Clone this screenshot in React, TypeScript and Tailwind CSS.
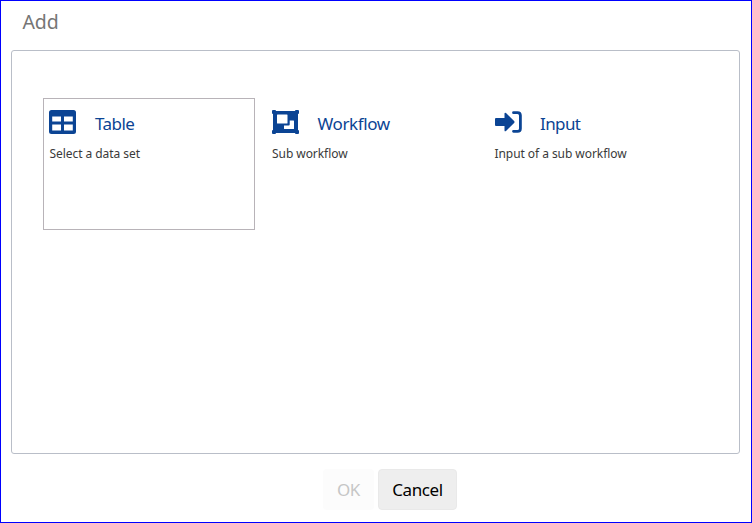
import type { ReactNode } from 'react';

function TableIcon() {
  return (
    <svg width="27" height="24" viewBox="0 0 27 24" className="-ml-[0.5px] block">
      <path
        fill="#0b4494"
        fillRule="evenodd"
        d="M2.5 0H24.5A2.5 2.5 0 0 1 27 2.5V21.5A2.5 2.5 0 0 1 24.5 24H2.5A2.5 2.5 0 0 1 0 21.5V2.5A2.5 2.5 0 0 1 2.5 0ZM3.2 6.5V11.5H12V6.5ZM15 6.5V11.5H23.8V6.5ZM3.2 14.5V20.5H12V14.5ZM15 14.5V20.5H23.8V14.5Z"
      />
    </svg>
  );
}

function WorkflowIcon() {
  return (
    <svg width="27" height="24" viewBox="0 0 27 24" className="block">
      <path
        fill="#0b4494"
        fillRule="evenodd"
        d="M0 1Q0 0 1 0H3Q4 0 4 1H23Q23 0 24 0H26Q27 0 27 1V3Q27 4 26 4V20Q27 20 27 21V23Q27 24 26 24H24Q23 24 23 23H4Q4 24 3 24H1Q0 24 0 23V21Q0 20 1 20V4Q0 4 0 3ZM5.5 4.5Q5 4.5 5 5V13Q5 13.5 5.5 13.5H15Q15.5 13.5 15.5 13V5Q15.5 4.5 15 4.5ZM17.7 10.5V14.5Q17.7 15.5 16.7 15.5H12V18.5Q12 19 12.5 19H21.5Q22 19 22 18.5V11Q22 10.5 21.5 10.5Z"
      />
    </svg>
  );
}

function InputIcon() {
  return (
    <svg width="27" height="22" viewBox="0 0 27 22" className="block">
      <path
        fill="#0b4494"
        d="M1 7H9.5V2.5Q9.7 1.1 11 2L19.1 10Q20 11 19.1 12L11 20Q9.7 20.9 9.5 19.5V15H1Q0 15 0 14V8Q0 7 1 7Z"
      />
      <path
        fill="none"
        stroke="#0b4494"
        strokeWidth="2.8"
        strokeLinecap="round"
        d="M18.5 1.7H22.5Q25.4 1.7 25.4 4.6V17.4Q25.4 20.3 22.5 20.3H18.5"
      />
    </svg>
  );
}

type ItemProps = {
  icon: ReactNode;
  title: string;
  titleClass: string;
  description: string;
  selected?: boolean;
};

function Item({ icon, title, titleClass, description, selected }: ItemProps) {
  return (
    <button
      className={`flex h-[132px] w-[212px] flex-col items-start border pl-[5.5px] pt-[11px] text-left ${
        selected ? 'border-[#b8b3b8]' : 'border-transparent'
      }`}
    >
      <span className="flex h-6 items-center">
        <span className="w-[45.5px]">{icon}</span>
        <span className={`whitespace-nowrap pt-[3px] text-[17px] leading-6 text-[#0b4494] ${titleClass}`}>{title}</span>
      </span>
      <span className="mt-3 whitespace-nowrap text-[12px] leading-4 tracking-[-0.06px] text-[#3a3a3a]">
        {description}
      </span>
    </button>
  );
}

export default function App() {
  return (
    <main className="flex h-[523px] w-[752px] flex-col border border-[#0000ff] bg-white px-2.5 font-['Noto_Sans',sans-serif]">
      <h1 className="h-[49px] pl-[11.5px] pt-[7px] text-[19.5px] leading-7 tracking-[-0.1px] text-[#757575]">Add</h1>
      <section className="flex h-[404px] w-[729px] gap-[10.5px] rounded-[3px] border border-[#b9bec8] pl-[31px] pt-[47px]">
        <Item
          selected
          icon={<TableIcon />}
          title="Table"
          titleClass="tracking-[-0.55px]"
          description="Select a data set"
        />
        <Item
          icon={<WorkflowIcon />}
          title="Workflow"
          titleClass="tracking-[-0.4px]"
          description="Sub workflow"
        />
        <Item
          icon={<InputIcon />}
          title="Input"
          titleClass="tracking-[-0.6px]"
          description="Input of a sub workflow"
        />
      </section>
      <footer className="flex gap-1 pl-[312px] pt-[15px] text-[17px]">
        <button disabled className="h-[41px] w-[51px] rounded-[4px] bg-[#fcfcfc] tracking-[-0.3px] text-[#c6c6c6]">
          OK
        </button>
        <button className="h-[41px] w-[79px] rounded-[4px] border border-[#e9e9e9] bg-[#eee] tracking-[-0.4px] text-black">
          Cancel
        </button>
      </footer>
    </main>
  );
}
